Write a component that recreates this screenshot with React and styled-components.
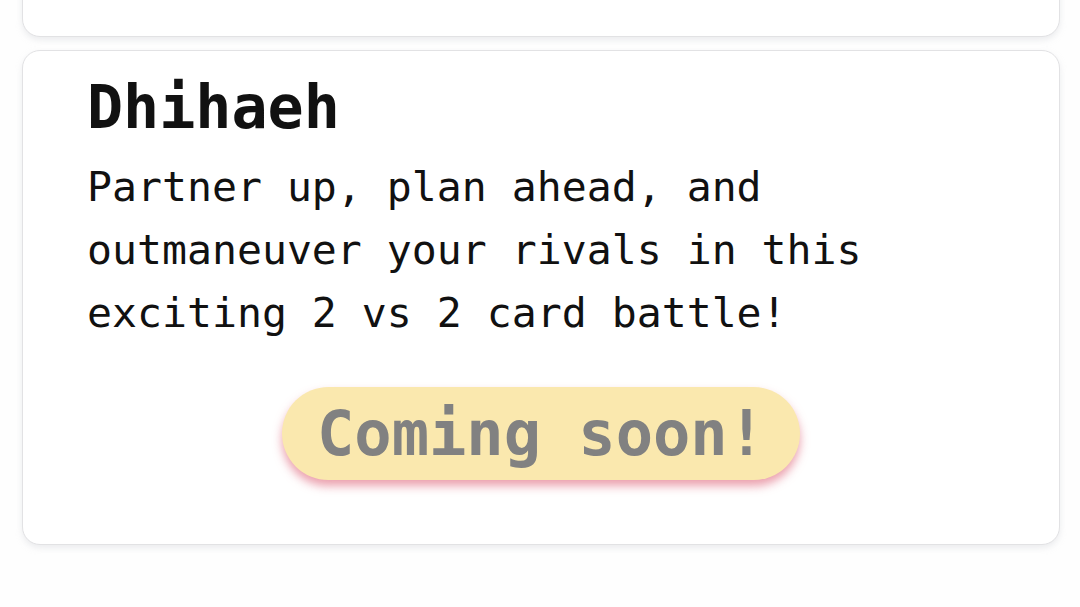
import React from 'react';
import styled, { createGlobalStyle } from 'styled-components';

const GlobalStyle = createGlobalStyle`
  html, body {
    margin: 0;
    padding: 0;
    background: #fefefe;
  }

  body {
    font-family: 'DejaVu Sans Mono', 'Liberation Mono', monospace;
    color: #111;
  }
`;

const List = styled.main`
  display: flex;
  flex-direction: column;
  gap: 13px;
  margin-top: -199px;
  padding: 0 20px 60px 22px;
`;

const Card = styled.section`
  background: #fff;
  border: 1.5px solid #e2e2e4;
  border-radius: 18px;
  box-shadow: 0 3px 6px rgba(200, 202, 210, 0.35);
  box-sizing: border-box;
  min-height: ${props => props.$height || 0}px;
  padding: 20px 64px 64px;
`;

const Title = styled.h2`
  font-size: 60px;
  font-weight: 700;
  line-height: 72px;
  margin: 0 0 12px;
`;

const Blurb = styled.p`
  font-size: 41.5px;
  line-height: 63px;
  margin: 0;
  max-width: 800px;
`;

const Actions = styled.div`
  display: flex;
  justify-content: center;
  margin-top: 43px;
`;

const SoonBadge = styled.span`
  background: #fae8ae;
  border-radius: 47px;
  box-shadow: 0 6px 10px rgba(224, 110, 130, 0.65);
  color: #818181;
  font-size: 62px;
  font-weight: 700;
  height: 93px;
  line-height: 93px;
  padding: 0 35px;
`;

const App = () => (
  <>
    <GlobalStyle />
    <List>
      <Card $height={236} />
      <Card>
        <Title>Dhihaeh</Title>
        <Blurb>
          Partner up, plan ahead, and outmaneuver your rivals in this exciting 2 vs 2 card battle!
        </Blurb>
        <Actions>
          <SoonBadge>Coming soon!</SoonBadge>
        </Actions>
      </Card>
    </List>
  </>
);

export default App;
